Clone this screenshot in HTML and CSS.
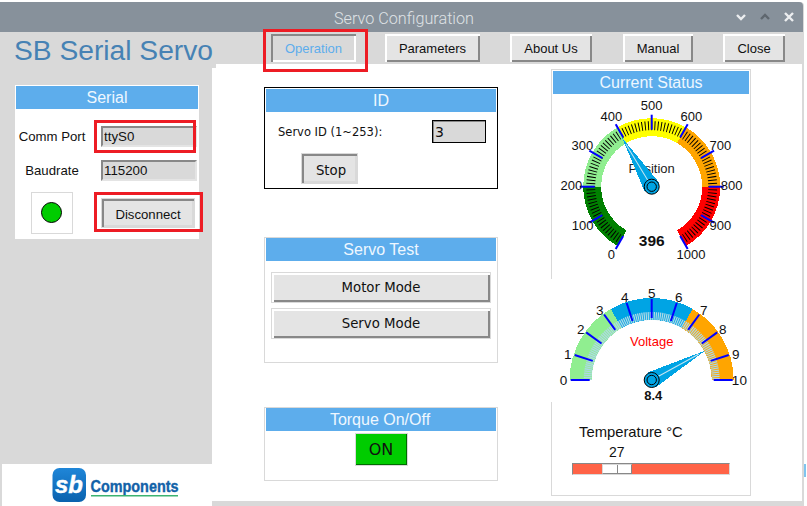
FILE: index.html
```html
<!DOCTYPE html>
<html lang="en">
<head>
    <meta charset="UTF-8">
    <title>Servo Configuration</title>
    <link rel="stylesheet" href="styles.css">
</head>
<body>
    <div class="window">
        <div class="titlebar">
            <span></span>
            <span class="title">Servo Configuration</span>
            <div class="controls">
                <svg width="12" height="12" viewBox="0 0 12 12"><path d="M2 4l4 4 4-4" class="ctl"/></svg>
                <svg width="12" height="12" viewBox="0 0 12 12"><path d="M2 8l4-4 4 4" class="ctl ctl-off"/></svg>
                <svg width="12" height="12" viewBox="0 0 12 12"><path d="M2 2l8 8M10 2l-8 8" class="ctl"/></svg>
            </div>
        </div>

        <header class="topbar">
            <h1>SB Serial Servo</h1>
            <nav class="nav">
                <button class="btn btn-active w-operation">Operation</button>
                <button class="btn w-parameters">Parameters</button>
                <button class="btn w-about">About Us</button>
                <button class="btn w-manual">Manual</button>
                <button class="btn w-close">Close</button>
            </nav>
        </header>

        <div class="content">
            <aside class="sidebar">
                <section class="card">
                    <h2 class="heading">Serial</h2>
                    <div class="serial-grid">
                        <label for="port">Comm Port</label>
                        <input id="port" class="field" type="text" value="ttyS0" readonly>
                        <label for="baud">Baudrate</label>
                        <input id="baud" class="field" type="text" value="115200" readonly>
                        <div class="led-box"><div class="led"></div></div>
                        <button class="btn btn-sunken btn-disconnect">Disconnect</button>
                    </div>
                </section>
                <div class="logo">
                    <svg width="150" height="36" viewBox="0 0 150 36">
                        <defs>
                            <linearGradient id="logoBlue" x1="0" y1="0" x2="0" y2="1">
                                <stop offset="0" stop-color="#1f86d8"/>
                                <stop offset="1" stop-color="#0a62ae"/>
                            </linearGradient>
                        </defs>
                        <rect x="0.5" y="1" width="33.5" height="34" rx="7" fill="url(#logoBlue)"/>
                        <text x="3" y="26" class="logo-sb" textLength="28" lengthAdjust="spacingAndGlyphs">sb</text>
                        <text x="38.5" y="24.5" class="logo-name" textLength="88" lengthAdjust="spacingAndGlyphs">Components</text>
                        <rect x="39" y="28" width="87" height="1.5" fill="#3cb371"/>
                    </svg>
                </div>
            </aside>

            <main class="main">
                <div class="left-col">
                    <section class="panel panel-id">
                        <h2 class="heading">ID</h2>
                        <div class="id-row">
                            <label for="servo" class="id-label">Servo ID (1~253):</label>
                            <input id="servo" class="id-input" type="text" value="3" readonly>
                        </div>
                        <button class="btn btn-sunken btn-stop">Stop</button>
                    </section>

                    <section class="panel panel-test">
                        <h2 class="heading">Servo Test</h2>
                        <div class="test-buttons">
                            <button class="btn btn-mode">Motor Mode</button>
                            <button class="btn btn-mode">Servo Mode</button>
                        </div>
                    </section>

                    <section class="panel panel-torque">
                        <h2 class="heading heading-torque">Torque On/Off</h2>
                        <button class="btn-on">ON</button>
                    </section>
                </div>

                <section class="status">
                    <h2 class="heading">Current Status</h2>

                    <svg class="gauge-position" width="196" height="185" viewBox="0 0 196 185">
                        <g transform="translate(98.7 92.7)">
                            <g fill="none" stroke-width="18" shape-rendering="crispEdges">
                                <path d="M-29.75 51.53A59.5 59.5 0 0 1-59.5 0" stroke="#008000"/>
                                <path d="M-59.5 0A59.5 59.5 0 0 1-29.75-51.53" stroke="#90ee90"/>
                                <path d="M-29.75-51.53A59.5 59.5 0 0 1 29.75-51.53" stroke="#ffff00"/>
                                <path d="M29.75-51.53A59.5 59.5 0 0 1 59.5 0" stroke="#ffa500"/>
                                <path d="M59.5 0A59.5 59.5 0 0 1 29.75 51.53" stroke="#ff0000"/>
                            </g>
                            <path d="M-30.5 52.83A61 61 0 1 1 30.5 52.83" fill="none" stroke="#000" stroke-width="9" pathLength="300" stroke-dasharray="0.9 2.1" stroke-dashoffset="0.45"/>
                            <g stroke="#0000ff" stroke-width="2">
                                <line y1="-57" y2="-72" transform="rotate(-150)"/>
                                <line y1="-57" y2="-72" transform="rotate(-120)"/>
                                <line y1="-57" y2="-72" transform="rotate(-90)"/>
                                <line y1="-57" y2="-72" transform="rotate(-60)"/>
                                <line y1="-57" y2="-72" transform="rotate(-30)"/>
                                <line y1="-57" y2="-72"/>
                                <line y1="-57" y2="-72" transform="rotate(30)"/>
                                <line y1="-57" y2="-72" transform="rotate(60)"/>
                                <line y1="-57" y2="-72" transform="rotate(90)"/>
                                <line y1="-57" y2="-72" transform="rotate(120)"/>
                                <line y1="-57" y2="-72" transform="rotate(150)"/>
                            </g>
                            <g class="scale" text-anchor="middle">
                                <text x="-40.3" y="72.5">0</text>
                                <text x="-69" y="43.5">100</text>
                                <text x="-80.3" y="3.5">200</text>
                                <text x="-69.3" y="-36.5">300</text>
                                <text x="-40.3" y="-65.5">400</text>
                                <text x="0" y="-76.5">500</text>
                                <text x="39.7" y="-65.5">600</text>
                                <text x="68.7" y="-36.5">700</text>
                                <text x="80" y="3.5">800</text>
                                <text x="68.7" y="43.5">900</text>
                                <text x="39.3" y="72.5">1000</text>
                            </g>
                            <text class="gauge-name" y="-13.5" text-anchor="middle">Position</text>
                            <g transform="rotate(-31.2)">
                                <polygon points="-8.5,0 0,-57 8.5,0" fill="#00a4e4" shape-rendering="crispEdges"/>
                                <line y2="-50" stroke="#c6e6f2" stroke-width="1"/>
                            </g>
                            <circle r="7.5" fill="#00a4e4" stroke="#000"/>
                            <circle r="4.7" fill="#00a4e4" stroke="#000"/>
                            <text class="gauge-value" y="59" text-anchor="middle">396</text>
                        </g>
                    </svg>

                    <svg class="gauge-voltage" width="198" height="123" viewBox="0 0 198 123">
                        <g transform="translate(100.7 101)">
                            <g fill="none" stroke-width="22" shape-rendering="crispEdges">
                                <path d="M-71 0A71 71 0 0 1-35.5-61.49" stroke="#90ee90"/>
                                <path d="M-35.5-61.49A71 71 0 0 1 35.5-61.49" stroke="#00a4e4"/>
                                <path d="M35.5-61.49A71 71 0 0 1 71 0" stroke="#ffa500"/>
                            </g>
                            <path d="M-64 0A64 64 0 0 1 64 0" fill="none" stroke="#add8e6" stroke-width="8" pathLength="180" stroke-dasharray="1.1 0.7"/>
                            <g stroke="#0000ff" stroke-width="2">
                                <line y1="-62" y2="-81" transform="rotate(-90)"/>
                                <line y1="-62" y2="-81" transform="rotate(-72)"/>
                                <line y1="-62" y2="-81" transform="rotate(-54)"/>
                                <line y1="-62" y2="-81" transform="rotate(-36)"/>
                                <line y1="-62" y2="-81" transform="rotate(-18)"/>
                                <line y1="-62" y2="-81"/>
                                <line y1="-62" y2="-81" transform="rotate(18)"/>
                                <line y1="-62" y2="-81" transform="rotate(36)"/>
                                <line y1="-62" y2="-81" transform="rotate(54)"/>
                                <line y1="-62" y2="-81" transform="rotate(72)"/>
                                <line y1="-62" y2="-81" transform="rotate(90)"/>
                            </g>
                            <g class="scale scale-large" text-anchor="middle">
                                <text x="-88.3" y="5">0</text>
                                <text x="-84" y="-21.5">1</text>
                                <text x="-71" y="-46.5">2</text>
                                <text x="-52" y="-65.5">3</text>
                                <text x="-27" y="-78.5">4</text>
                                <text x="0" y="-82.5">5</text>
                                <text x="27" y="-78.5">6</text>
                                <text x="52" y="-65.5">7</text>
                                <text x="71" y="-46.5">8</text>
                                <text x="84" y="-21.5">9</text>
                                <text x="87.7" y="5">10</text>
                            </g>
                            <text class="gauge-name gauge-name-red" y="-34.5" text-anchor="middle">Voltage</text>
                            <g transform="rotate(61.2)">
                                <polygon points="-8.5,0 0,-61 8.5,0" fill="#00a4e4" shape-rendering="crispEdges"/>
                                <line y2="-54" stroke="#c6e6f2" stroke-width="1"/>
                            </g>
                            <circle r="7.5" fill="#00a4e4" stroke="#000"/>
                            <circle r="4.7" fill="#00a4e4" stroke="#000"/>
                            <text class="gauge-value-small" x="1.6" y="19.5" text-anchor="middle">8.4</text>
                        </g>
                    </svg>

                    <div class="temp-label">Temperature °C</div>
                    <div class="temp-value">27</div>
                    <div class="slider">
                        <div class="slider-thumb"><span></span><span></span></div>
                    </div>
                </section>
            </main>
        </div>
    </div>

    <!-- red boxes drawn over the screenshot -->
    <div class="mark mark-operation"></div>
    <div class="mark mark-port"></div>
    <div class="mark mark-disconnect"></div>

    <div class="desk-scrap"></div>
</body>
</html>
```

FILE: styles.css
```css
* {
    box-sizing: border-box;
}

body {
    position: relative;
    width: 807px;
    height: 506px;
    margin: 0;
    overflow: hidden;
    background-color: #FFFFFF;
    color: #111111;
    font-family: "Liberation Sans", Arial, sans-serif;
    font-size: 13px;
}

.window {
    display: flex;
    flex-direction: column;
    width: 804px;
    height: 504px;
    margin-top: 2px;
    background-color: #d9d9d9;
    border-right: 2px solid #d9d9d9;
    border-top-right-radius: 4px;
}

/* title bar */
.titlebar {
    display: grid;
    grid-template-columns: 1fr auto 1fr;
    align-items: center;
    flex: none;
    height: 30px;
    margin-right: -1px;
    padding: 2px 0 0 5px;
    background-color: #87919b;
    border-top-right-radius: 4px;
}

.title {
    color: #dfe2e5;
    font-family: Roboto, sans-serif;
    font-size: 16.2px;
    font-weight: 300;
}

.controls {
    display: flex;
    justify-content: flex-end;
    gap: 12px;
    margin-top: -2px;
    padding-right: 8px;
}

.ctl {
    fill: none;
    stroke: #eceef0;
    stroke-width: 2.4;
}

.ctl-off {
    stroke: #5f676f;
}

/* top row */
.topbar {
    display: flex;
    flex: none;
    height: 32px;
    padding-left: 14px;
}

.topbar h1 {
    width: 257px;
    margin: 0;
    color: #4682b4;
    font-size: 28.2px;
    font-weight: normal;
    line-height: 37px;
    white-space: nowrap;
}

.nav {
    display: flex;
    gap: 30px;
    padding-top: 2px;
}

.btn {
    height: 28px;
    padding: 0;
    background-color: #e4e4e4;
    border: 1px solid #d9d9d9;
    box-shadow: inset 2px 2px 0 #FFFFFF, inset -2px -2px 0 #888888;
    color: #111111;
    font-family: "Liberation Sans", Arial, sans-serif;
    font-size: 13px;
}

.nav .btn {
    border: 0;
}

.btn-active {
    background-color: #d9d9d9;
    box-shadow: inset 2px 2px 0 #888888, inset -2px -2px 0 #FFFFFF;
    color: #5dadec;
}

.btn-sunken {
    box-shadow: inset 2px 2px 0 #888888, inset -2px -2px 0 #d9d9d9;
}

.w-operation { width: 85px; margin-right: -1px; }
.w-parameters { width: 95px; }
.w-about { width: 82px; }
.w-manual { width: 70px; margin-left: 1px; }
.w-close { width: 62px; }

/* content */
.content {
    display: flex;
    flex: 1;
    min-height: 0;
}

.sidebar {
    display: flex;
    flex-direction: column;
    flex: none;
    width: 212px;
    padding: 21px 0 0 2px;
}

.card {
    width: 184px;
    height: 154px;
    margin-left: 13px;
    padding: 1px;
    background-color: #FFFFFF;
}

.heading {
    height: 23px;
    margin: 0;
    background-color: #5dadec;
    color: #eef7ff;
    font-size: 16px;
    font-weight: normal;
    line-height: 23px;
    text-align: center;
}

.heading-torque {
    padding-right: 2px;
}

.serial-grid {
    display: grid;
    grid-template-columns: 72px 96px;
    gap: 13px;
    align-items: center;
    padding-top: 17px;
}

.serial-grid label {
    font-size: 13.2px;
    text-align: center;
}

.field {
    width: 96px;
    height: 21px;
    padding: 0 0 0 1px;
    background-color: #d9d9d9;
    border: 2px solid;
    border-color: #888888 #e4e4e4 #e4e4e4 #888888;
    color: #111111;
    font-family: "Liberation Sans", Arial, sans-serif;
    font-size: 13.3px;
}

.led-box {
    display: flex;
    align-items: center;
    justify-content: center;
    justify-self: center;
    width: 42px;
    height: 42px;
    margin-top: -2px;
    padding: 0 1px 1px 0;
    border: 1px solid #d9d9d9;
}

.led {
    width: 21px;
    height: 21px;
    background-color: #00cc00;
    border: 1px solid #000000;
    border-radius: 50%;
}

.btn-disconnect {
    width: 94px;
    height: 30px;
    margin-top: -2px;
    padding-top: 2px;
    font-size: 13.2px;
}

.logo {
    display: flex;
    align-items: center;
    flex: none;
    height: 42px;
    margin-top: auto;
    padding-left: 50px;
    background-color: #FFFFFF;
}

.logo-sb {
    fill: #FFFFFF;
    stroke: #FFFFFF;
    stroke-width: 0.4;
    font-size: 24px;
    font-style: italic;
    font-weight: bold;
}

.logo-name {
    fill: #1262a8;
    stroke: #1262a8;
    stroke-width: 0.4;
    font-size: 17px;
    font-weight: bold;
}

.main {
    position: relative;
    display: flex;
    flex: 1;
    margin-bottom: 5px;
    padding: 5px 0 0 52px;
    background-color: #FFFFFF;
}

/* small step where the top bar meets the white area */
.main::before {
    content: "";
    position: absolute;
    top: 0;
    left: 0;
    width: 4px;
    height: 4px;
    background-color: #d9d9d9;
}

.left-col {
    width: 234px;
    padding-top: 18px;
}

.panel {
    padding: 0 1px;
    background-color: #FFFFFF;
    border: 1px solid #d9d9d9;
}

.panel-id {
    height: 102px;
    padding-top: 1px;
    border-color: #000000;
}

.id-row {
    display: flex;
    align-items: center;
    justify-content: space-between;
    margin-top: 8px;
    padding: 0 10px 0 12px;
}

.id-label {
    font-family: "DejaVu Sans", sans-serif;
    font-size: 11.5px;
}

.id-input {
    width: 54px;
    height: 23px;
    padding: 0 0 0 2px;
    background-color: #d9d9d9;
    border: 1px solid #000000;
    box-shadow: inset 1px 1px 0 #888888;
    color: #111111;
    font-family: "DejaVu Sans", sans-serif;
    font-size: 14px;
}

.btn-stop {
    display: block;
    width: 57px;
    height: 31px;
    margin: 10px 0 0 35px;
    padding: 3px 0 0 3px;
    font-family: "DejaVu Sans", sans-serif;
    font-size: 13.3px;
}

.panel-test {
    height: 126px;
    margin-top: 48px;
}

.test-buttons {
    display: flex;
    flex-direction: column;
    align-items: center;
    gap: 5px;
    padding-top: 11px;
}

.btn-mode {
    width: 220px;
    height: 31px;
    font-family: "DejaVu Sans", sans-serif;
    font-size: 13.3px;
}

.panel-torque {
    height: 74px;
    margin-top: 44px;
    text-align: center;
}

.btn-on {
    width: 53px;
    height: 33px;
    margin-top: 2px;
    padding: 0;
    background-color: #00cc00;
    border: 1px solid #d9d9d9;
    box-shadow: inset -1px -1px 0 #006b00;
    color: #111111;
    font-family: "DejaVu Sans", sans-serif;
    font-size: 16px;
}

/* status column */
.status {
    width: 200px;
    height: 427px;
    margin-left: 53px;
    padding: 1px;
    background-color: #FFFFFF;
    border: 1px solid #d9d9d9;
}

.gauge-position,
.gauge-voltage {
    display: block;
    background-color: #FFFFFF;
}

.gauge-voltage {
    position: relative;
    margin-left: -2px;
}

.scale {
    fill: #111111;
    font-size: 13px;
}

.scale-large {
    font-size: 13.5px;
}

.gauge-name {
    fill: #222222;
    font-size: 13px;
}

.gauge-name-red {
    fill: #ff0000;
}

.gauge-value {
    fill: #111111;
    font-size: 15.5px;
    font-weight: bold;
}

.gauge-value-small {
    fill: #111111;
    font-size: 13px;
    font-weight: bold;
}

.temp-label {
    margin-top: 21px;
    padding-left: 26px;
    font-size: 14.8px;
    line-height: 18px;
}

.temp-value {
    margin-top: 2px;
    padding-left: 56px;
    font-size: 14px;
    line-height: 18px;
}

.slider {
    width: 158px;
    height: 12px;
    margin: 2px 0 0 19px;
    background-color: #ff6347;
    border: 1px solid;
    border-color: #888888 #d9d9d9 #d9d9d9 #888888;
}

.slider-thumb {
    display: flex;
    width: 30px;
    height: 10px;
    margin-left: 29px;
    background-color: #FFFFFF;
    border: 1px solid;
    border-color: #d9d9d9 #888888 #888888 #d9d9d9;
}

.slider-thumb span {
    flex: 1;
}

.slider-thumb span + span {
    border-left: 1px solid #888888;
}

/* annotations */
.mark {
    position: absolute;
    border: 3px solid #ed1c24;
}

.mark-operation {
    top: 29px;
    left: 263px;
    width: 105px;
    height: 43px;
}

.mark-port {
    top: 120px;
    left: 94px;
    width: 102px;
    height: 33px;
}

.mark-disconnect {
    top: 192px;
    left: 94px;
    width: 109px;
    height: 40px;
}

.desk-scrap {
    position: absolute;
    top: 464px;
    left: 804px;
    width: 2px;
    height: 13px;
    background-color: #7fc4ee;
}
```
